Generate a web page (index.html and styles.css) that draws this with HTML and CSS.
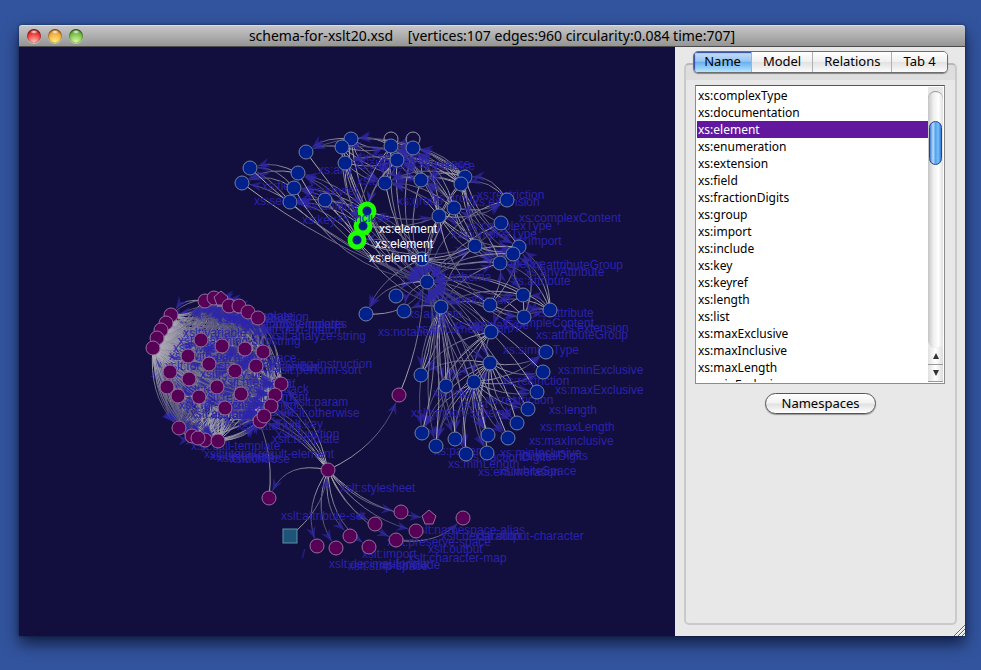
FILE: index.html
```html
<!DOCTYPE html>
<html lang="en">
<head>
<meta charset="utf-8">
<title>schema-for-xslt20.xsd</title>
<link rel="stylesheet" href="styles.css">
</head>
<body>
<main class="window">
  <header class="titlebar">
    <div class="lights">
      <button class="light red" aria-label="Close"></button>
      <button class="light amber" aria-label="Minimize"></button>
      <button class="light green" aria-label="Zoom"></button>
    </div>
    <h1 class="title">schema-for-xslt20.xsd    [vertices:107 edges:960 circularity:0.084 time:707]</h1>
  </header>
  <div class="content">
    <svg class="graph" id="graph" viewBox="19 47 656 589" role="img" aria-label="Schema graph"></svg>
    <aside class="sidebar">
      <div class="tabs" role="tablist">
        <button class="tab active" role="tab" aria-selected="true">Name</button>
        <button class="tab" role="tab">Model</button>
        <button class="tab" role="tab">Relations</button>
        <button class="tab" role="tab">Tab 4</button>
      </div>
      <section class="panel">
        <div class="listbox">
          <ul class="names" role="listbox" aria-label="Names" tabindex="0">
            <li role="option">xs:complexType</li>
            <li role="option">xs:documentation</li>
            <li role="option" class="selected" aria-selected="true">xs:element</li>
            <li role="option">xs:enumeration</li>
            <li role="option">xs:extension</li>
            <li role="option">xs:field</li>
            <li role="option">xs:fractionDigits</li>
            <li role="option">xs:group</li>
            <li role="option">xs:import</li>
            <li role="option">xs:include</li>
            <li role="option">xs:key</li>
            <li role="option">xs:keyref</li>
            <li role="option">xs:length</li>
            <li role="option">xs:list</li>
            <li role="option">xs:maxExclusive</li>
            <li role="option">xs:maxInclusive</li>
            <li role="option">xs:maxLength</li>
            <li role="option">xs:minExclusive</li>
          </ul>
          <div class="scrollbar">
            <div class="track"><div class="thumb"></div></div>
            <button class="arrow" aria-label="Scroll up"><svg viewBox="0 0 8 8"><path d="M4 1 7 7H1z"/></svg></button>
            <button class="arrow" aria-label="Scroll down"><svg viewBox="0 0 8 8"><path d="M1 1h6L4 7z"/></svg></button>
          </div>
        </div>
        <button class="namespaces">Namespaces</button>
      </section>
      <svg class="grip" viewBox="0 0 12 12" aria-hidden="true"><path class="grip-light" d="M2 12 12 2M6 12l6-6M10 12l2-2"/><path class="grip-dark" d="M1 12 12 1M5 12l7-7M9 12l3-3"/></svg>
    </aside>
  </div>
</main>
<script src="graph.js"></script>
</body>
</html>
```
FILE: styles.css
```css
* { box-sizing: border-box; }

body {
  margin: 0;
  min-height: 100vh;
  padding: 25px 16px 34px 19px;
  display: flex;
  background: #32549e;
  color: #000;
  font-family: "Noto Sans", "Open Sans", sans-serif;
  font-size: 12px;
}

button {
  margin: 0;
  padding: 0;
  border: 0;
  font: inherit;
  color: inherit;
}

.window {
  flex: 1;
  display: flex;
  flex-direction: column;
  border-radius: 3px 3px 0 0;
  box-shadow: 0 8px 16px rgba(0, 0, 20, .65), 0 0 3px rgba(0, 0, 20, .5);
}

.titlebar {
  display: grid;
  grid-template-columns: 64px 1fr 64px;
  align-items: center;
  height: 22px;
  padding: 0 8px;
  border-top: 1px solid #dedede;
  border-bottom: 1px solid #4c4c4c;
  border-radius: 3px 3px 0 0;
  background: linear-gradient(#c6c6c6, #959595);
}

.lights { display: flex; gap: 7px; }

.light {
  width: 14px;
  height: 14px;
  border-radius: 50%;
  box-shadow: inset 0 1px 2px rgba(0, 0, 0, .5), inset 0 0 1px rgba(0, 0, 0, .6), 0 1px 0 rgba(255, 255, 255, .4);
}
.red { background: radial-gradient(ellipse 4px 2px at 50% 20%, #fff, transparent), radial-gradient(circle at 50% 95%, #ffc5be, #f0403b 55%, #a01015); }
.amber { background: radial-gradient(ellipse 4px 2px at 50% 20%, #fff, transparent), radial-gradient(circle at 50% 95%, #fff57a, #f2aa42 60%, #a85510); }
.green { background: radial-gradient(ellipse 4px 2px at 50% 20%, #fff, transparent), radial-gradient(circle at 50% 95%, #dcffa0, #78be48 60%, #2d6917); }

.title {
  margin: 0;
  font-size: 14px;
  font-weight: 400;
  line-height: 20px;
  text-align: center;
  white-space: pre;
}

.content { flex: 1; display: flex; background: #120e3d; }

.graph {
  flex: 1;
  min-width: 0;
  font-family: "Liberation Sans", Arial, sans-serif;
  font-size: 12px;
}
.edge { fill: none; stroke-width: 1; }
.head { fill: #2e27a6; fill-opacity: .7; }
.node { stroke: #7580a0; stroke-width: 1; }
.xs { fill: #00208c; }
.xslt { fill: #560056; stroke: #95709c; }
.root { fill: #1d5478; stroke: #5b91a5; }
.picked { fill: #00208c; stroke: #1eff00; stroke-width: 5; }
.label { fill: #2b23ad; }
.label-picked { fill: #fff; }

.sidebar {
  position: relative;
  flex: 0 0 290px;
  display: flex;
  flex-direction: column;
  padding: 4px 8px 11px 9px;
  background: #e8e8e8;
}

.tabs {
  z-index: 1;
  display: flex;
  align-self: center;
  height: 22px;
  margin-bottom: -10px;
  border: 1px solid #6d6d6d;
  border-radius: 5px;
  overflow: hidden;
  box-shadow: 0 1px 1px rgba(0, 0, 0, .4);
}
.tab {
  padding: 0 11px 2px;
  border-left: 1px solid #b0b0b0;
  background: linear-gradient(#fff, #f0f0f0 48%, #e2e2e2 52%, #fbfbfb);
  font-size: 13px;
  line-height: 18px;
}
.tab.active {
  padding: 0 10px 2px;
  border-left: 0;
  background: linear-gradient(#c5def7, #9bc6f2 45%, #6cb0ef 52%, #b6e5ff);
  box-shadow: inset 1px 1px 1px #31479b;
}

.panel {
  flex: 1;
  display: flex;
  flex-direction: column;
  align-items: center;
  padding: 20px 11px;
  border: 2px solid #cacaca;
  border-top-color: #b8b8b8;
  border-radius: 5px;
  background: linear-gradient(#dedede 15px, #e8e8e8 15px);
}

.listbox {
  align-self: stretch;
  display: flex;
  height: 299px;
  margin-left: -2px;
  margin-right: -1px;
  padding: 1px;
  border: 1px solid #8c8c8c;
  border-top-color: #555;
  background: #fff;
}
.names {
  flex: 1;
  margin: 0;
  padding: 0;
  list-style: none;
  overflow: hidden;
  line-height: 17px;
}
.names li { padding-left: 1px; }
.names .selected { background: #61189f; color: #fff; }

.scrollbar { width: 15px; display: flex; flex-direction: column; background: #e8e8e8; }
.track {
  flex: 1;
  padding: 29px 1px 0;
  margin-top: 4px;
  border-top: 1px solid #999;
  border-radius: 8px;
  background: linear-gradient(90deg, #c4c4c4, #eee 35%, #fff 70%, #e0e0e0);
}
.thumb {
  height: 44px;
  border: 1px solid #2b3f92;
  border-radius: 7px;
  background: linear-gradient(90deg, #3e7fd2, #b5dcff 28%, #5aa2ec 50%, #71c0fb 75%, #3479cf);
}
.arrow {
  height: 17px;
  border-bottom: 1px solid #999;
  background: linear-gradient(90deg, #e0e0e0, #fff 50%, #ddd);
  line-height: 0;
}
.arrow svg { width: 8px; height: 8px; fill: #333; }

.namespaces {
  width: 111px;
  height: 21px;
  margin-top: 9px;
  border: 1px solid #555;
  border-radius: 11px;
  background: linear-gradient(#fff, #f2f2f2 48%, #e0e0e0 52%, #fff);
  box-shadow: 0 1px 1px rgba(0, 0, 0, .35);
  font-size: 13px;
  line-height: 19px;
}

.grip { position: absolute; right: 0; bottom: 0; width: 12px; height: 12px; fill: none; }
.grip-light { stroke: #fff; }
.grip-dark { stroke: #666; }
```
FILE: graph.js
```js
const svg = document.getElementById("graph");
const NS = "http://www.w3.org/2000/svg";

const nodes = [
  [250,168,"xs:field"],[242,183,"xs:selector"],[306,152,"xs:any"],[298,173,"xs:keyref"],
  [294,188,"xs:unique"],[290,202,"xs:key"],[325,200,"xs:include"],[351,139,"xs:sequence"],
  [342,147,"xs:choice"],[345,163,"xs:all"],[391,146,"xs:sequence"],[413,148,"xs:choice"],
  [397,160,"xs:all"],[385,183,"xs:group"],[421,180,"xs:group"],[465,177,"xs:restriction"],
  [461,184,"xs:extension"],[507,200,"xs:complexContent"],[454,208,"xs:complexType"],[439,216,"xs:complexType"],
  [501,223,"xs:import"],[475,246,"xs:redefine"],[519,247,"xs:attributeGroup"],[513,254,"xs:anyAttribute"],
  [500,263,"xs:attribute"],[422,259,"xs:schema"],[427,282,"xs:annotation"],[396,296,"xs:appinfo"],
  [404,311,"xs:documentation"],[366,314,"xs:notation"],[441,307,"xs:simpleType"],[490,305,"xs:simpleContent"],
  [523,295,"xs:attribute"],[524,317,"xs:attributeGroup"],[550,310,"xs:extension"],[491,332,"xs:simpleType"],
  [490,363,"xs:restriction"],[546,352,"xs:minExclusive"],[543,372,"xs:maxExclusive"],[421,375,"xs:union"],
  [446,386,"xs:list"],[474,382,"xs:restriction"],[537,392,"xs:length"],[528,409,"xs:maxLength"],
  [517,423,"xs:maxInclusive"],[508,438,"xs:totalDigits"],[422,433,"xs:pattern"],[436,446,"xs:minLength"],
  [455,439,"xs:fractionDigits"],[466,454,"xs:enumeration"],[488,435,"xs:minInclusive"],[487,453,"xs:whiteSpace"],
  [367,211,"xs:element","picked"],[363,226,"xs:element","picked"],[357,240,"xs:element","picked"],
  [171,315,"xslt:variable"],[166,323,"xslt:matching-substring"],[161,330,"xslt:when"],[157,338,"xslt:with-param"],
  [153,348,"xslt:for-each"],[205,301,"xslt:sequence"],[214,298,"xslt:template"],[221,299,"xslt:instruction","pentagon"],
  [229,306,"xslt:apply-templates"],[239,306,"xslt:apply-imports"],[248,312,"xslt:next-match"],[258,318,"xslt:analyze-string"],
  [201,340,"xslt:namespace"],[222,346,"xslt:processing-instruction"],[245,349,"xslt:number"],[263,352,"xslt:perform-sort"],
  [188,356,"xslt:copy-of"],[209,364,"xslt:message"],[235,371,"xslt:fallback"],[256,366,"xslt:if"],
  [170,372,"xslt:text"],[189,379,"xslt:result-document"],[217,387,"xslt:comment"],[167,387,"xslt:for-each-group"],
  [178,396,"xslt:attribute"],[199,397,"xslt:attribute"],[241,394,"xslt:sort"],[225,408,"xslt:attribute"],
  [281,384,"xslt:param"],[275,395,"xslt:otherwise"],[271,406,"xslt:key"],[260,421,"xslt:template"],
  [264,416,"xslt:function"],[179,428,"xslt:call-template"],[192,436,"xslt:literal-result-element"],
  [205,440,"xslt:number"],[198,438,"xslt:element"],[218,441,"xslt:choose"],
  [399,395,"xslt:import-schema"],[328,470,"xslt:stylesheet"],[269,498,"xslt:attribute-set"],[317,546,"xslt:decimal-format"],
  [336,548,"xslt:strip-space"],[350,536,"xslt:import"],[369,547,"xslt:include"],[375,524,"xslt:preserve-space"],
  [401,512,"xslt:namespace-alias"],[396,540,"xslt:character-map"],[416,531,"xslt:output"],
  [429,518,"xslt:declaration","pentagon"],[463,518,"xslt:output-character"],[290,536,"/","root"]
];

/* source, targets, bend */
const links = [
  [36,[37,38,39,40,42,43,44,45,46,47,48,49,50,51,26],.2],
  [41,[37,38,42,43,44,45,46,47,48,49,50,51,36],.16],
  [35,[36,39,40,41,26,46,47],.2],
  [30,[39,40,41,36,35,46,47,48,49,50,26,28],.14],
  [26,[27,28,29],.3],
  [25,[6,19,20,21,22,24,29,30,35,52,54,26,32,33],.2],
  [52,[3,4,5,19,26,30],.14],[53,[3,4,5,18,26,30],.16],[54,[3,4,5,21,26,30],.18],
  [3,[0,1,26],.2],[4,[0,1,26],.25],[5,[0,1,26],.1],
  [0,[26],.1],[1,[26],.08],[2,[26],.07],[6,[26],.1],[29,[26],.3],
  [7,[2,10,12,13,52,26],.2],[8,[2,10,13,53,26,14],.15],[9,[12,13,52,53,26],.15],
  [10,[7,11,12,13,26,54],.18],[11,[2,10,12,14,26,52],.2],[12,[9,13,14,26,52,53],.16],
  [13,[26,12,10],.1],[14,[10,11,12,26,13],.2],
  [15,[7,9,10,11,12,13,14,22,24,26],.2],[16,[8,10,11,12,13,14,22,23,24,26],.18],
  [17,[15,16,26],.3],[18,[10,11,12,13,14,17,21,24,26],.18],
  [19,[10,11,12,13,14,17,22,23,24,31,26],.2],
  [20,[26],.13],[21,[13,14,19,22,24,26,30],.2],[22,[23,24,26,18,32],.25],[23,[26,24],.2],[24,[26,30,18],.2],
  [31,[26,33,34,24,22,30],.16],[32,[26,30,35],.2],[33,[22,24,26,32],.25],[34,[22,23,24,26,32,33,31],.25],
  [37,[26],.1],[38,[26],.08],[39,[26,30],.16],[40,[26,30],.1],[42,[26],.12],[43,[26],.08],[44,[26],.15],
  [45,[26],.06],[46,[26],.12],[47,[26],.08],[48,[26],.08],[49,[26],.1],[50,[26],.05],[51,[26],.15],
  [93,[25],.12],
  [94,[95],.4],[94,[93],.2],[94,[96,97,98,99],.25],[94,[100,101,102,103,104],.18],[94,[84,85,86,87,81,83],.15],
  [106,[94],.2],[102,[105],.25],[92,[86],.2],[95,[81],.2]
];

function add(tag, attrs, text) {
  const el = document.createElementNS(NS, tag);
  for (const key in attrs) el.setAttribute(key, attrs[key]);
  if (text) el.textContent = text;
  svg.append(el);
  return el;
}

const defs = add("defs", {});
let count = 0;

/* Every edge leaves its source bowed to the same side. */
function edge(from, to, bend) {
  const [x1, y1] = nodes[from], [x2, y2] = nodes[to];
  const dx = x2 - x1, dy = y2 - y1;
  const cx = (x1 + x2) / 2 - dy * bend, cy = (y1 + y2) / 2 + dx * bend;
  const angle = Math.atan2(y2 - cy, x2 - cx);
  const tx = x2 - 8 * Math.cos(angle), ty = y2 - 8 * Math.sin(angle);
  const grad = document.createElementNS(NS, "linearGradient");
  const id = "g" + count++;
  Object.entries({ id, gradientUnits: "userSpaceOnUse", x1, y1, x2, y2 })
    .forEach(([key, value]) => grad.setAttribute(key, value));
  grad.innerHTML = '<stop offset="0" stop-color="#b6b5bc"/><stop offset=".5" stop-color="#6c6985"/><stop offset="1" stop-color="#3a366e"/>';
  defs.append(grad);
  add("path", { class: "edge", stroke: `url(#${id})`, d: `M${x1} ${y1}Q${cx} ${cy} ${tx} ${ty}` });
  add("path", { class: "head", d: "M0 0-12-5-8 0-12 5z", transform: `translate(${tx} ${ty}) rotate(${angle * 180 / Math.PI})` });
}

/* The templates cluster: nearly every instruction may contain every other one. */
for (let from = 60; from <= 92; from++) {
  for (let to = 60; to <= 92; to++) {
    if (from !== to && (from * 7 + to * 3) % 5 < 2) edge(from, to, .24);
  }
}
for (let from = 60; from <= 92; from += 2) edge(from, 55 + from % 5, .3);
for (let from = 55; from < 60; from++) {
  for (let to = 60; to <= 92; to++) edge(from, to, .22);
}

links.forEach(([from, targets, bend]) => targets.forEach(to => edge(from, to, bend)));

/* Self references above the group nodes */
[[391,139],[413,139]].forEach(([cx, cy]) => add("circle", { class: "edge", cx, cy, r: 7, stroke: "#9896a5" }));

function drawNode([x, y, label, kind]) {
  const family = label.startsWith("xslt") ? "xslt" : "xs";
  if (kind === "root") {
    add("rect", { class: "node root", x: x - 7, y: y - 7, width: 14, height: 14 });
  } else if (kind === "pentagon") {
    add("path", { class: "node xslt", d: `M${x} ${y - 8}l7 6-3 8h-8l-3-8z` });
  } else {
    add("circle", { class: "node " + (kind || family), cx: x, cy: y, r: 7 });
  }
}

function drawLabel([x, y, label, kind]) {
  add("text", { class: kind === "picked" ? "label-picked" : "label", x: x + 12, y: y + 22 }, label);
}

const picked = nodes.filter(node => node[3] === "picked");
const others = nodes.filter(node => node[3] !== "picked");
picked.forEach(drawNode);
others.forEach(drawLabel);
others.forEach(drawNode);
picked.forEach(drawLabel);
```
